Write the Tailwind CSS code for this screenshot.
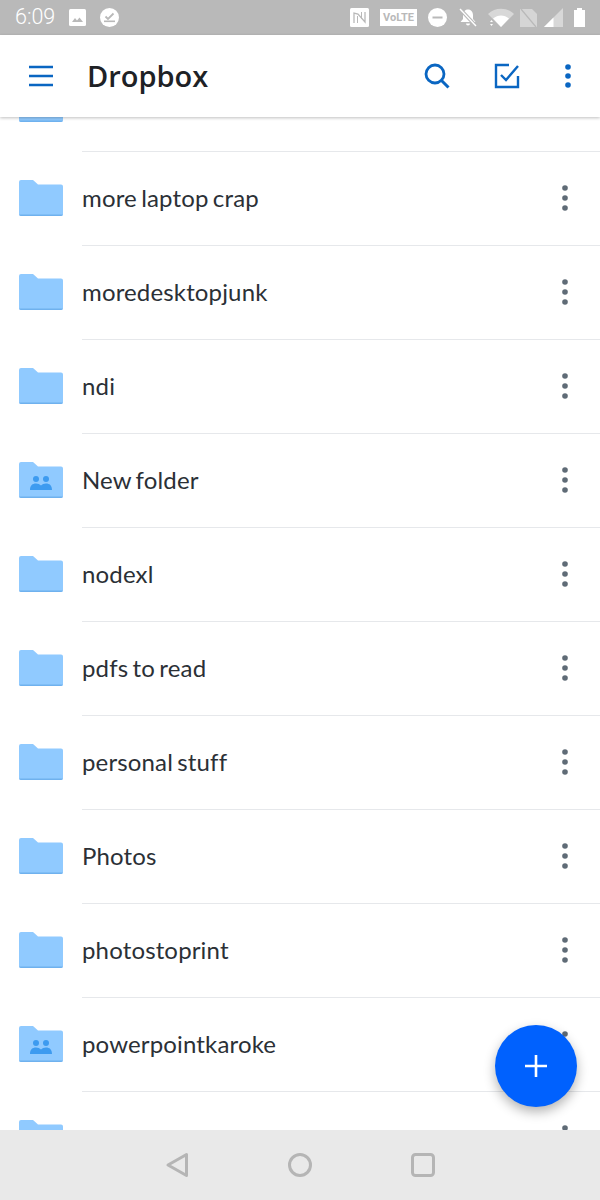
<!DOCTYPE html>
<html lang="en">
<head>
  <meta charset="UTF-8">
  <title>Dropbox</title>
  <script src="https://cdn.jsdelivr.net/npm/@tailwindcss/browser@4"></script>
</head>
<body class="relative h-[1200px] w-[600px] overflow-hidden bg-white flex flex-col font-['Lato',sans-serif]">
  <!-- status bar -->
  <div class="h-[35px] shrink-0 bg-[#b9b9b9] flex items-center pl-[15px] pr-[15px] text-white">
    <span class="font-['Roboto',sans-serif] font-light text-[21.500px] w-[55px]">6:09</span>
    <svg class="w-[17px] h-[17px] ml-[-1px]" viewBox="0 0 17 17"><rect width="17" height="17" rx="1.5" fill="#fff"/><path d="M3 13l3-4 2 2.5 2.500-3L14 13z" fill="#b9b9b9"/></svg>
    <svg class="w-[19px] h-[19px] ml-[14px]" viewBox="0 0 19 19"><circle cx="9.500" cy="9.500" r="9.500" fill="#fff"/><path d="M5.500 8.500l2.500 2.500 5.500-5.500" fill="none" stroke="#b9b9b9" stroke-width="1.800"/><path d="M4 13.300h11" stroke="#b9b9b9" stroke-width="1.600"/></svg>
    <div class="ml-auto flex items-center">
      <svg class="w-[19px] h-[19px]" viewBox="0 0 19 19"><rect width="19" height="19" rx="1.500" fill="#fff"/><path d="M4 15V5l4 1 7 8V4" fill="none" stroke="#b9b9b9" stroke-width="1.300"/><path d="M7.500 8v7M11.500 4v7" stroke="#b9b9b9" stroke-width="1"/></svg>
      <span class="ml-[11px] w-[37px] h-[17px] bg-white text-[#b9b9b9] text-[11px] font-bold font-['Roboto',sans-serif] flex items-center justify-center leading-none">VoLTE</span>
      <svg class="w-[19px] h-[19px] ml-[11px]" viewBox="0 0 19 19"><circle cx="9.500" cy="9.500" r="9.500" fill="#fff"/><rect x="4.500" y="8.500" width="10" height="2" fill="#b9b9b9"/></svg>
      <svg class="w-[20px] h-[20px] ml-[11px]" viewBox="0 0 20 20"><path d="M10 1.500c3.200 0 5 2.500 5 5.500v4l2.500 3H2.500L5 11V7c0-3 1.800-5.500 5-5.500zM8 15.500h4a2 2 0 0 1-4 0z" fill="#fff"/><path d="M2 1l16 17" stroke="#b9b9b9" stroke-width="3.500"/><path d="M2 1l16 17" stroke="#fff" stroke-width="1.400"/></svg>
      <svg class="w-[26px] h-[20px] ml-[10px]" viewBox="0 0 26 20"><path d="M0 6C7-1 19-1 26 6L13 19z" fill="#fff" opacity=".45"/><path d="M5 10.500c5-4 11-4 16 0L13 19z" fill="#fff"/><path d="M2 14l1.500-2L5 14zM2 16h3l-1.500 2z" fill="#fff"/></svg>
      <svg class="w-[17px] h-[18px] ml-[6px]" viewBox="0 0 17 18"><path d="M0 0h12l5 5v13H0z" fill="#fff" opacity=".4"/><path d="M1 0l15 18" stroke="#b9b9b9" stroke-width="1.300"/></svg>
      <svg class="w-[19px] h-[19px] ml-[7px]" viewBox="0 0 19 19"><path d="M19 0v19H0z" fill="#fff" opacity=".45"/><path d="M9.500 9.500V19H0z" fill="#fff"/></svg>
      <svg class="w-[11px] h-[19px] ml-[11px]" viewBox="0 0 11 19"><path d="M3 0h5v2h3v17H0V2h3z" fill="#fff"/></svg>
    </div>
  </div>

  <!-- app bar -->
  <header class="relative z-10 h-[82px] shrink-0 bg-white flex items-center shadow-[0_1px_3px_rgba(0,0,0,0.25)]">
    <svg class="ml-[29px] w-[24px] h-[22px]" viewBox="0 0 24 22"><path d="M0 2h24M0 11h24M0 20h24" stroke="#0a66c2" stroke-width="2.600"/></svg>
    <h1 class="ml-[34px] mb-[2px] text-[29px] font-semibold text-[#1e2226] font-['Open_Sans',sans-serif] leading-none">Dropbox</h1>
    <svg class="ml-auto w-[26px] h-[26px]" viewBox="0 0 26 26"><circle cx="11" cy="11" r="9" fill="none" stroke="#0a66c2" stroke-width="2.800"/><path d="M17.500 17.500l7 7" stroke="#0a66c2" stroke-width="3"/></svg>
    <svg class="ml-[44px] w-[26px] h-[26px]" viewBox="0 0 26 26"><path d="M15 2H2v22h22V13" fill="none" stroke="#0a66c2" stroke-width="2.400"/><path d="M7 12l5 5L24 3" fill="none" stroke="#0a66c2" stroke-width="2.400"/></svg>
    <svg class="ml-[45px] mr-[29px] w-[6px] h-[24px]" viewBox="0 0 6 24"><circle cx="3" cy="3" r="2.800" fill="#0a66c2"/><circle cx="3" cy="12" r="2.800" fill="#0a66c2"/><circle cx="3" cy="21" r="2.800" fill="#0a66c2"/></svg>
  </header>

  <!-- file list, scrolled part way -->
  <main class="flex-1 overflow-hidden">
    <ul id="list" class="mt-[-59px]"></ul>
  </main>

  <!-- nav bar -->
  <nav class="relative z-10 h-[70px] shrink-0 bg-[#e9e9e9] flex items-center justify-center pb-[1px]">
    <svg class="w-[24px] h-[26px] mr-[99px]" viewBox="0 0 24 26"><path d="M21.500 2.500v21L3 13z" fill="none" stroke="#b5b5b5" stroke-width="3" stroke-linejoin="round"/></svg>
    <svg class="w-[24px] h-[24px]" viewBox="0 0 24 24"><circle cx="12" cy="12" r="10.500" fill="none" stroke="#b5b5b5" stroke-width="3"/></svg>
    <svg class="w-[24px] h-[24px] ml-[99px]" viewBox="0 0 24 24"><rect x="1.500" y="1.500" width="21" height="21" rx="3" fill="none" stroke="#b5b5b5" stroke-width="3"/></svg>
  </nav>

  <!-- new button -->
  <button class="absolute z-20 left-[495px] top-[1025px] w-[82px] h-[82px] rounded-full bg-[#0061fe] flex items-center justify-center shadow-[0_5px_12px_rgba(0,0,0,0.3)]">
    <svg class="w-[22px] h-[22px]" viewBox="0 0 22 22"><path d="M11 0v22M0 11h22" stroke="#fff" stroke-width="2.600"/></svg>
  </button>

  <script>
    const folders = [
      ['mobile play', 0], ['more laptop crap', 0], ['moredesktopjunk', 0], ['ndi', 0],
      ['New folder', 1], ['nodexl', 0], ['pdfs to read', 0], ['personal stuff', 0],
      ['Photos', 0], ['photostoprint', 0], ['powerpointkaroke', 1], ['proposed', 0]
    ];
    const people = '<circle cx="17" cy="17" r="3" fill="#3d9bf0"/><circle cx="27" cy="17" r="3" fill="#3d9bf0"/><path d="M11 28c0-4.500 2.500-6.500 6-6.500 2 0 3.800.7 5 2 1.200-1.300 3-2 5-2 3.500 0 6 2 6 6.500z" fill="#3d9bf0"/>';
    document.getElementById('list').innerHTML = folders.map(([name, shared]) => `
      <li class="flex items-center h-[94px] relative">
        <svg class="ml-[19px] w-[44px] h-[36px] mb-[3px] shrink-0" viewBox="0 0 44 36">
          <path d="M0 2a2 2 0 0 1 2-2h12l5 4.500h23a2 2 0 0 1 2 2V34a2 2 0 0 1-2 2H2a2 2 0 0 1-2-2z" fill="#90caff"/>
          <path d="M0 34.500h44V34a2 2 0 0 1-2 2H2a2 2 0 0 1-2-2z" fill="#6fb1ee"/>
          ${shared ? people : ''}
        </svg>
        <span class="ml-[19px] mb-[2px] text-[24px] text-[#2b3036] leading-none tracking-[0.15px] [word-spacing:-2px]">${name}</span>
        <svg class="ml-auto mr-[32px] mb-[2px] w-[6px] h-[26px] shrink-0" viewBox="0 0 6 26"><circle cx="3" cy="3" r="2.800" fill="#5f6b76"/><circle cx="3" cy="13" r="2.800" fill="#5f6b76"/><circle cx="3" cy="23" r="2.800" fill="#5f6b76"/></svg>
        <div class="absolute left-[82px] right-0 bottom-0 h-[1px] bg-[#e6e8eb]"></div>
      </li>`).join('');
  </script>
</body>
</html>
